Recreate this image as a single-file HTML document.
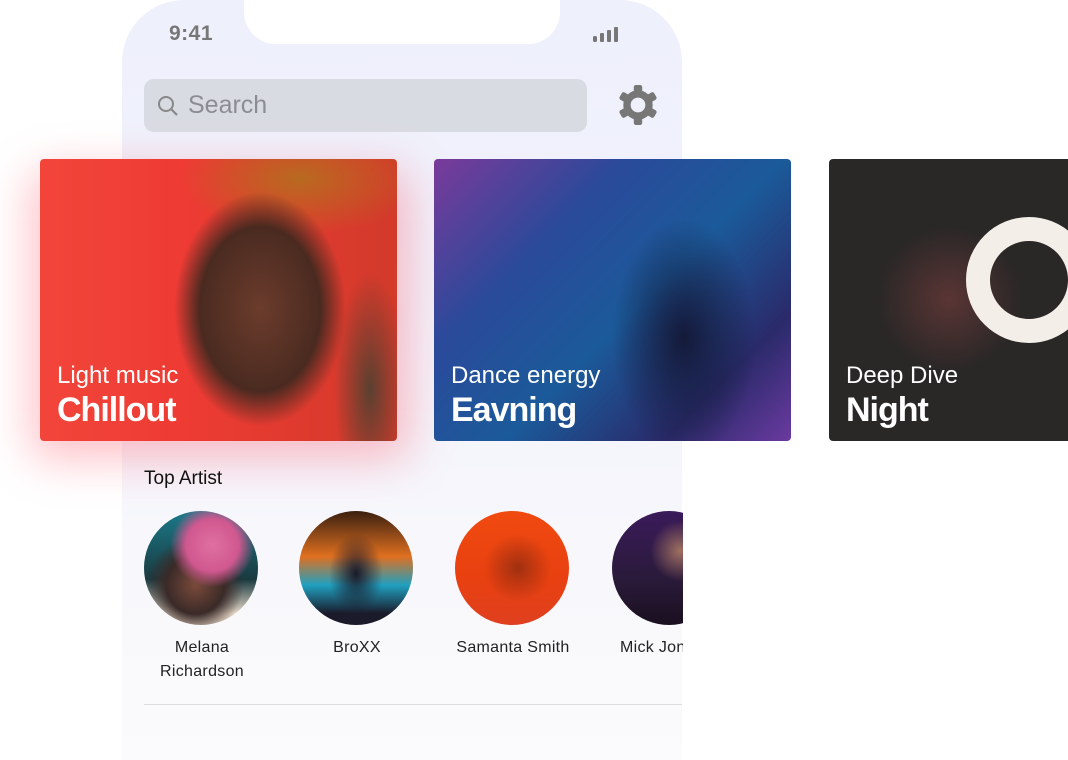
<!DOCTYPE html>
<html><head><meta charset="utf-8"><style>
*{margin:0;padding:0;box-sizing:border-box}
body{width:1068px;height:724px;background:#fff;position:relative;overflow:hidden;font-family:"Liberation Sans",sans-serif}
.phone{position:absolute;left:122px;top:0;width:560px;height:760px;border-radius:62px 62px 0 0;background:linear-gradient(180deg,#eef0fc 0%,#f1f2fb 40%,#f8f8fc 75%,#fbfbfd 100%)}
.notch{position:absolute;left:244px;top:-2px;width:316px;height:46px;background:#fff;border-radius:0 0 32px 32px}
.time{position:absolute;left:169px;top:22px;font-size:21px;color:#777;font-weight:bold;letter-spacing:0.5px}
.search{position:absolute;left:144px;top:79px;width:443px;height:53px;border-radius:10px;background:#d9dbe3}
.search span{position:absolute;left:44px;top:12px;font-size:25px;color:#8c8d93}
.card{position:absolute;top:159px;width:357px;height:282px;border-radius:4px;overflow:hidden}
.card .a{position:absolute;left:17px;top:203px;color:#fff;font-size:24px}
.card .b{position:absolute;left:17px;top:232px;color:#fff;font-size:34px;font-weight:bold;letter-spacing:-1px}
.glow{position:absolute;left:30px;top:170px;width:380px;height:290px;border-radius:20px;background:rgba(255,80,100,.35);filter:blur(22px)}
h3{position:absolute;left:144px;top:468px;font-size:19px;font-weight:normal;color:#111}
.av{position:absolute;top:511px;width:114px;height:114px;border-radius:50%}
.nm{position:absolute;top:636px;font-size:16px;color:#222;text-align:center;width:160px;line-height:24px;letter-spacing:.3px}
.line{position:absolute;left:144px;top:704px;width:538px;height:1px;background:#ddd}
</style></head><body>
<div class="phone"></div>
<div class="notch"></div>
<div class="time">9:41</div>
<svg style="position:absolute;left:593px;top:27px" width="26" height="16"><rect x="0" y="9" width="4" height="6" rx="1.5" fill="#777"/><rect x="7" y="6" width="4" height="9" rx="1" fill="#777"/><rect x="14" y="3" width="4" height="12" rx="1" fill="#777"/><rect x="21" y="0" width="4" height="15" rx="1" fill="#777"/></svg>
<div class="search"><svg style="position:absolute;left:12px;top:15px" width="24" height="24"><circle cx="10" cy="10" r="7" fill="none" stroke="#888" stroke-width="2"/><line x1="15" y1="15" x2="21" y2="21" stroke="#888" stroke-width="2.2"/></svg><span>Search</span></div>
<svg style="position:absolute;left:617px;top:84px" width="42" height="42" viewBox="0 0 40 40"><g fill="#777"><circle cx="20" cy="20" r="14"/><g id="t"><rect x="16" y="1" width="8" height="9" rx="2"/></g><use href="#t" transform="rotate(60 20 20)"/><use href="#t" transform="rotate(120 20 20)"/><use href="#t" transform="rotate(180 20 20)"/><use href="#t" transform="rotate(240 20 20)"/><use href="#t" transform="rotate(300 20 20)"/></g><circle cx="20" cy="20" r="7" fill="#eef0fb"/></svg>
<div class="glow"></div>
<div class="card" style="left:40px;background:radial-gradient(ellipse 40px 130px at 330px 230px,#5a4030,transparent 90%),radial-gradient(ellipse 110px 150px at 220px 150px,#6b3c2c 0%,#4a2a20 55%,transparent 78%),radial-gradient(ellipse 150px 70px at 260px 20px,#b86a20,transparent 80%),linear-gradient(90deg,#f2453a 0%,#ee3b34 40%,#d23a2a 100%)"><div class="a">Light music</div><div class="b">Chillout</div></div>
<div class="card" style="left:434px;background:radial-gradient(ellipse 90px 150px at 250px 180px,#141a3a,transparent 80%),linear-gradient(135deg,#7a3a9a 0%,#2a4a9a 30%,#1b5a9a 55%,#2a2a6a 80%,#6a3aa0 100%)"><div class="a">Dance energy</div><div class="b">Eavning</div></div>
<div class="card" style="left:829px;width:260px;background:radial-gradient(ellipse 90px 90px at 120px 140px,#5a3534,transparent 80%),#2a2727"><svg style="position:absolute;left:135px;top:58px" width="140" height="130"><circle cx="65" cy="63" r="51" fill="none" stroke="#f4eee8" stroke-width="24"/></svg><div class="a">Deep Dive</div><div class="b">Night</div></div>
<h3>Top Artist</h3>
<div class="av" style="left:144px;background:radial-gradient(circle at 60% 30%,#e070a0 0%,#d05890 25%,transparent 40%),radial-gradient(circle at 45% 65%,#7a4a3a 0%,#3a2a28 30%,transparent 50%),linear-gradient(180deg,#1a7a8a,#1a3a40 60%,#e8d8c8 90%)"></div>
<div class="av" style="left:299px;background:radial-gradient(ellipse 30px 45px at 50% 55%,#1a1a2a,transparent 90%),linear-gradient(180deg,#3a2010,#e07020 40%,#20a0c0 65%,#1a1a2a 90%)"></div>
<div class="av" style="left:455px;background:radial-gradient(circle at 55% 50%,#a03010 0%,transparent 40%),linear-gradient(180deg,#f04a10,#e84010 60%,#e04020)"></div>
<div class="av" style="left:612px;background:radial-gradient(circle at 60% 35%,#a07060 0%,transparent 30%),linear-gradient(180deg,#3a1a5a,#2a1a3a 60%,#1a1020)"></div>
<div style="position:absolute;left:683px;top:500px;width:400px;height:230px;background:#fff"></div>
<div class="nm" style="left:122px">Melana<br>Richardson</div>
<div class="nm" style="left:277px">BroXX</div>
<div class="nm" style="left:433px">Samanta Smith</div>
<div class="nm" style="left:620px;width:63px;text-align:left;overflow:hidden;white-space:nowrap">Mick Jones</div>
<div class="line"></div>
</body></html>
